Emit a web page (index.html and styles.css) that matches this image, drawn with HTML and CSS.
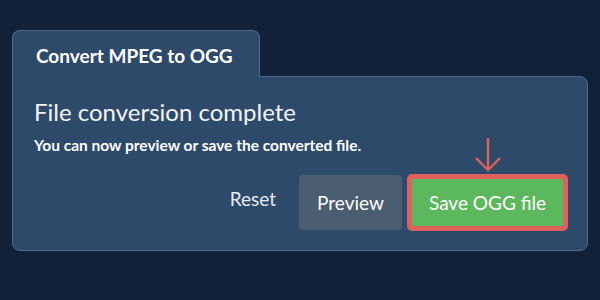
FILE: index.html
```html
<!DOCTYPE html>
<html lang="en">
<head>
    <meta charset="UTF-8">
    <meta name="viewport" content="width=device-width, initial-scale=1.0">
    <title>Convert MPEG to OGG</title>
    <link rel="stylesheet" href="styles.css">
</head>
<body>
    <div class="converter">
        <!-- tab header -->
        <div class="tab">
            <h1>Convert MPEG to OGG</h1>
        </div>

        <!-- panel body -->
        <div class="panel">
            <h2>File conversion complete</h2>
            <p>You can now preview or save the converted file.</p>

            <div class="actions">
                <button class="btn btn-link">Reset</button>
                <button class="btn btn-grey">Preview</button>
                <div class="save-wrap">
                    <svg class="hint-arrow" width="30" height="36" viewBox="0 0 30 36">
                        <path d="M15 1 V33 M3 21 L15 33 L27 21" fill="none" stroke="#e0615c" stroke-width="2.4"/>
                    </svg>
                    <button class="btn btn-save">Save OGG file</button>
                </div>
            </div>
        </div>
    </div>
</body>
</html>
```

FILE: styles.css
```css
body {
    margin: 0;
    padding: 30px 0 0 12px;
    background: #112238;
    color: white;
    font-family: 'Lato', 'Open Sans', sans-serif;
    height: 300px;
    box-sizing: border-box;
    overflow: hidden;
}

.converter {
    width: 576px;
}

.tab {
    position: relative;
    z-index: 2;
    width: 248px;
    height: 47px;
    box-sizing: border-box;
    margin-bottom: -1px;
    padding: 14px 0 0 23px;
    background: #2d4a6b;
    border: 1px solid #4e6a8c;
    border-bottom: none;
    border-radius: 8px 8px 0 0;
}

.tab h1 {
    margin: 0;
    font-size: 19px;
    font-weight: 700;
    line-height: 22px;
}

.panel {
    height: 175px;
    box-sizing: border-box;
    padding: 20px 19px 0 21px;
    background: #2d4a6b;
    border: 1px solid #4e6a8c;
    border-radius: 0 8px 8px 8px;
}

.panel h2 {
    margin: 0;
    font-size: 24px;
    font-weight: 400;
    line-height: 30px;
    color: #f2f4f7;
}

.panel p {
    margin: 9px 0 0;
    font-size: 15.5px;
    font-weight: 700;
    line-height: 18px;
}

.actions {
    display: flex;
    justify-content: flex-end;
    align-items: center;
    gap: 5px;
    margin-top: 20px;
}

.btn {
    height: 56px;
    border: none;
    border-radius: 4px;
    color: white;
    font-family: inherit;
    font-size: 19px;
    cursor: pointer;
}

.btn-link {
    background: none;
    padding: 0 18px;
    color: #e6eaef;
    margin-top: -8px;
}

.btn-grey {
    width: 103px;
    height: 55px;
    background: #4b5d70;
}

.save-wrap {
    position: relative;
}

.btn-save {
    width: 161px;
    height: 57px;
    background: #5cb85c;
    border: 5px solid #e0615c;
    border-radius: 5px;
}

.hint-arrow {
    position: absolute;
    left: 66px;
    top: -37px;
}
```
